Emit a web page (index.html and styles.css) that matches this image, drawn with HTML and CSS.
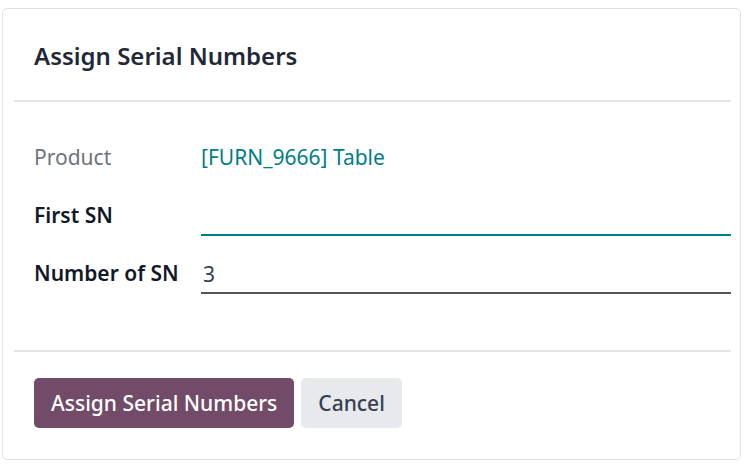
FILE: index.html
```html
<!DOCTYPE html>
<html>
<head>
<meta charset="utf-8">
<link rel="stylesheet" href="styles.css">
</head>
<body>
<div class="card">
  <div class="header">
    <h1 class="title">Assign Serial Numbers</h1>
  </div>
  <div class="body">
    <div class="row">
      <div class="label muted">Product</div>
      <div class="value link">[FURN_9666] Table</div>
    </div>
    <div class="row">
      <div class="label strong">First SN</div>
      <div class="value input focus"></div>
    </div>
    <div class="row">
      <div class="label strong">Number of SN</div>
      <div class="value input plain">3</div>
    </div>
  </div>
  <div class="footer">
    <button class="btn primary">Assign Serial Numbers</button>
    <button class="btn secondary">Cancel</button>
  </div>
</div>
</body>
</html>
```
FILE: styles.css
```css
* { box-sizing: border-box; }
html, body { margin: 0; padding: 0; background: #fff; }
body {
  font-family: "Noto Sans", "Open Sans", sans-serif;
  color: #212529;
  padding: 8px 4px 5px 2px;
}
.card {
  width: 739px;
  height: 452px;
  border: 1px solid #dee2e6;
  border-radius: 5px;
  display: flex;
  flex-direction: column;
  padding: 0 9px 0 11px;
}
.header {
  height: 93px;
  border-bottom: 2px solid #e5e5e5;
  display: flex;
  align-items: center;
  padding-left: 20px;
  padding-top: 4px;
}
.title {
  margin: 0;
  font-size: 24px;
  font-weight: 600;
  color: #1f2937;
  line-height: 1.2;
}
.body {
  height: 250px;
  border-bottom: 2px solid #e5e5e5;
  padding: 36px 0 0 20px;
  display: flex;
  flex-direction: column;
}
.row {
  display: flex;
  align-items: flex-end;
  height: 58px;
}
.row:first-child { height: 40px; align-items: center; }
.label {
  width: 167px;
  font-size: 21px;
  line-height: 1.2;
  padding-bottom: 8px;
}
.row:first-child .label, .row:first-child .value { padding-bottom: 0; }
.muted { color: #6c757d; }
.strong { font-weight: 600; color: #111827; }
.value { flex: 1; font-size: 21px; line-height: 1.2; }
.link { color: #017e84; }
.input {
  height: 38px;
  padding: 6px 2px 0;
}
.focus { border-bottom: 2px solid #017e84; }
.plain { border-bottom: 2px solid #555; color: #374151; }
.footer {
  flex: 1;
  display: flex;
  align-items: center;
  gap: 7px;
  padding-left: 20px;
  padding-bottom: 6px;
}
.btn {
  font-family: inherit;
  font-size: 21px;
  font-weight: 500;
  height: 50px;
  border-radius: 5px;
  border: none;
  padding: 0 17px;
}
.primary { background: #714b67; color: #fff; }
.secondary { background: #e7e9ed; color: #374151; }
```
